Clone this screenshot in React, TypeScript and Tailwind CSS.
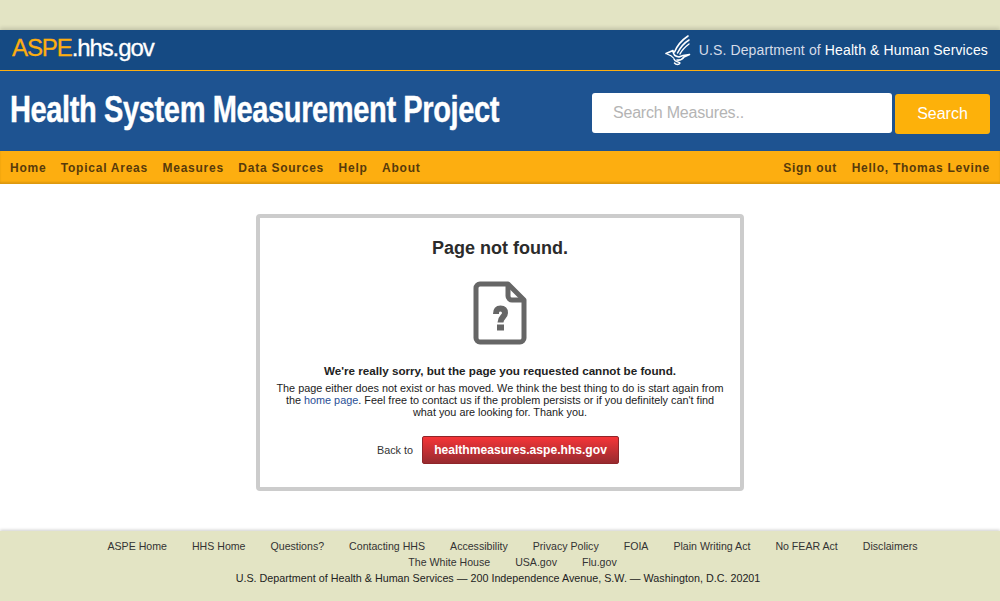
const navLeft = ["Home", "Topical Areas", "Measures", "Data Sources", "Help", "About"];
const footerLinks = ["ASPE Home", "HHS Home", "Questions?", "Contacting HHS", "Accessibility", "Privacy Policy", "FOIA", "Plain Writing Act", "No FEAR Act", "Disclaimers"];
const footerLinks2 = ["The White House", "USA.gov", "Flu.gov"];

function HhsEagle() {
  return (
    <svg width="26" height="31" viewBox="0 0 26 31" fill="none" stroke="white" strokeLinecap="round" strokeLinejoin="round">
      <path d="M23 1C17 5 12 11 9.5 17" strokeWidth="1.6" />
      <path d="M24 5C19 8 15 13 12.5 18" strokeWidth="1.5" />
      <path d="M24 9C20 12 17 15 15 19" strokeWidth="1.4" />
      <path d="M1 18.500L8 15.500C8 19 10 21.500 14 22L18 20.500L24.500 19.500L19 22C17 25 15 25.500 12 25" strokeWidth="1.6" />
      <path d="M2 19C5 20 7 21 8.500 23" strokeWidth="1.2" />
      <path d="M9 24C10 27 13 26.500 15 28C14 30 11 30 9.500 28" strokeWidth="1.5" />
    </svg>
  );
}

function MissingFileIcon() {
  return (
    <svg width="54" height="64" viewBox="0 0 54 64" fill="none">
      <path d="M7 3H35L51 19V57A4 4 0 0 1 47 61H7A4 4 0 0 1 3 57V7A4 4 0 0 1 7 3Z" stroke="#666" strokeWidth="5" strokeLinejoin="round" />
      <path d="M35 3V15A4 4 0 0 0 39 19H51" stroke="#666" strokeWidth="5" strokeLinejoin="round" />
      <path d="M23 33C23 29 24.500 27.500 27.500 27.500C30.500 27.500 32 29 32 32C32 36 27.500 36 27.500 41.500" stroke="#666" strokeWidth="6" />
      <rect x="24" y="43.500" width="7" height="6" fill="#666" />
    </svg>
  );
}

export default function App() {
  return (
    <div className="h-[601px] w-full overflow-hidden bg-white font-['Liberation_Sans',Arial,sans-serif] flex flex-col">
      <div className="h-[30px] shrink-0 bg-[#e3e4c4]" />

      <header className="shrink-0">
        <div className="h-[41px] bg-[#154a83] border-b border-[#fdae10] flex items-center justify-between pl-3 pr-3 shadow-[0_-2px_4px_rgba(0,0,0,0.15)]">
          <div className="text-[24px] leading-none tracking-[-1.1px] text-white mt-[-4px] [-webkit-text-stroke:0.3px]">
            <span className="text-[#fdae10]">ASPE</span>.hhs.gov
          </div>
          <div className="flex items-center gap-[8px]">
            <HhsEagle />
            <span className="text-[14px] text-[#d5dce8] tracking-[0.125px]">
              U.S. Department of <span className="text-white">Health &amp; Human Services</span>
            </span>
          </div>
        </div>

        <div className="h-[80px] bg-[#1e5391] flex items-center justify-between pl-[10px] pr-[10px]">
          <h1 className="text-[37px] font-bold text-white whitespace-nowrap origin-left scale-x-[0.785] w-[490px] tracking-[-0.5px] mt-[-2px] [-webkit-text-stroke:0.4px]">
            Health System Measurement Project
          </h1>
          <div className="h-[41px] mt-[5px] flex gap-[3px]">
            <div className="w-[300px] h-[40px] self-start bg-white rounded-[3px] flex items-center pl-[21px] pb-[1px] text-[16px] tracking-[-0.2px] text-[#b4b4b4]">
              Search Measures..
            </div>
            <div className="w-[95px] h-[40px] self-end bg-[#fdb10a] rounded-[3px] flex items-center justify-center pb-[1px] text-[16px] text-white">
              Search
            </div>
          </div>
        </div>

        <nav className="h-[33px] bg-[#fdae10] shadow-[inset_0_-2px_2px_#dd980f] flex items-center justify-between px-[10px] pt-[1px] text-[12px] font-bold text-[#573a0b] tracking-[0.75px]">
          <div className="flex gap-[14.500px]">
            {navLeft.map((item) => (
              <span key={item}>{item}</span>
            ))}
          </div>
          <div className="flex gap-[14.500px]">
            <span>Sign out</span>
            <span>Hello, Thomas Levine</span>
          </div>
        </nav>
      </header>

      <main className="flex-1 flex justify-center pt-[30px]">
        <div className="w-[488px] h-[277px] border-4 border-[#cccccc] rounded-[4px] flex flex-col items-center px-[10px] text-[#333]">
          <h2 className="mt-[19px] text-[18px] leading-[22px] font-bold text-[#2b2b2b]">Page not found.</h2>
          <div className="mt-[22px] h-[64px]">
            <MissingFileIcon />
          </div>
          <p className="mt-[19px] text-[11.660px] leading-[14px] font-bold text-[#222]">
            We're really sorry, but the page you requested cannot be found.
          </p>
          <p className="mt-[4px] w-[450px] text-center text-[10.850px] leading-[12px] text-[#222]">
            The page either does not exist or has moved. We think the best thing to do is start again from the{" "}
            <a className="text-[#2a4f96]">home page</a>. Feel free to contact us if the problem persists or if you definitely can't find what you are looking for. Thank you.
          </p>
          <div className="mt-[18px] mr-[4px] flex items-center gap-[9px]">
            <span className="text-[10.800px] text-[#333]">Back to</span>
            <a className="w-[197px] h-[28px] flex items-center justify-center rounded-[2px] border border-[#8f2529] bg-gradient-to-b from-[#f63437] to-[#982a2f] text-[12.100px] font-bold text-white">
              healthmeasures.aspe.hhs.gov
            </a>
          </div>
        </div>
      </main>

      <footer className="h-[70px] shrink-0 bg-[#e3e4c4] shadow-[0_-1px_3px_rgba(0,0,0,0.2)] flex flex-col items-center pt-[7px] text-[10.600px] leading-[16px] text-[#333]">
        <div className="flex gap-[25px] pl-[25px]">
          {footerLinks.map((item) => (
            <span key={item}>{item}</span>
          ))}
        </div>
        <div className="flex gap-[25px] pl-[25px]">
          {footerLinks2.map((item) => (
            <span key={item}>{item}</span>
          ))}
        </div>
        <div className="mr-[4px] text-[10.750px] text-[#222]">U.S. Department of Health &amp; Human Services — 200 Independence Avenue, S.W. — Washington, D.C. 20201</div>
      </footer>
    </div>
  );
}
